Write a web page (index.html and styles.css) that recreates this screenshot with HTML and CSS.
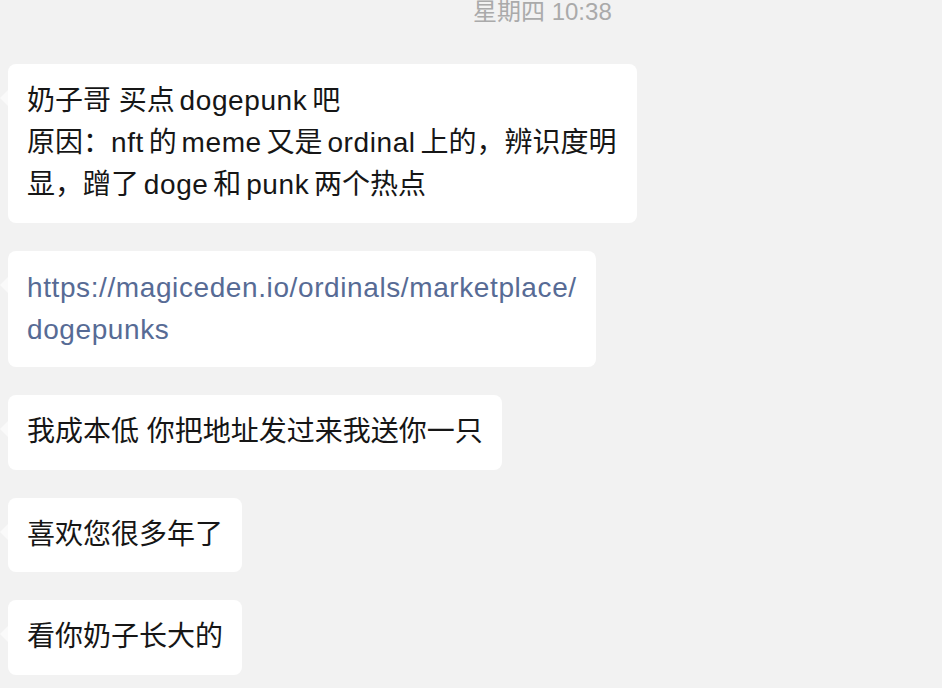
FILE: index.html
```html
<!DOCTYPE html>
<html lang="zh-CN">
<head>
    <meta charset="UTF-8">
    <meta name="viewport" content="width=device-width, initial-scale=1.0">
    <title>聊天记录</title>
    <link rel="stylesheet" href="styles.css">
</head>
<body>
    <div class="chat">
        <div class="time">星期四 10:38</div>

        <div class="messages">
            <div class="bubble">奶子哥 买点<span class="word">dogepunk</span>吧<br>原因：<span class="word word-first">nft</span>的<span class="word">meme</span>又是<span class="word">ordinal</span>上的，辨识度明显，蹭了<span class="word">doge</span>和<span class="word">punk</span>两个热点</div>
            <div class="bubble"><a class="link" href="#">https://magiceden.io/ordinals/marketplace/<br>dogepunks</a></div>
            <div class="bubble">我成本低 你把地址发过来我送你一只</div>
            <div class="bubble">喜欢您很多年了</div>
            <div class="bubble">看你奶子长大的</div>
        </div>
    </div>
</body>
</html>
```

FILE: styles.css
```css
* {
    margin: 0;
    padding: 0;
    box-sizing: border-box;
}

body {
    font-family: "Liberation Sans", "Noto Sans CJK SC", sans-serif;
    background: #f2f2f2;
    color: #161616;
    overflow: hidden;
}

.chat {
    padding-left: 8px;
}

.time {
    font-size: 24px;
    line-height: 22px;
    padding-top: 1px;
    color: #aaaaaa;
    padding-left: 465px;
}

.messages {
    display: flex;
    flex-direction: column;
    align-items: flex-start;
    gap: 28px;
    margin-top: 41px;
}

.bubble {
    position: relative;
    background: #ffffff;
    border-radius: 8px;
    padding: 16px 19px 16.5px;
    font-size: 28px;
    line-height: 42px;
    max-width: 629px;
}

.bubble::before {
    content: "";
    position: absolute;
    left: -8px;
    top: 26px;
    border-top: 8px solid transparent;
    border-bottom: 8px solid transparent;
    border-right: 8px solid #fafafa;
}

.word {
    letter-spacing: 0.6px;
    margin: 0 4.8px;
}

.word-first {
    margin-left: 0;
}

.link {
    color: #576b95;
    text-decoration: none;
    letter-spacing: 0.6px;
}
```
